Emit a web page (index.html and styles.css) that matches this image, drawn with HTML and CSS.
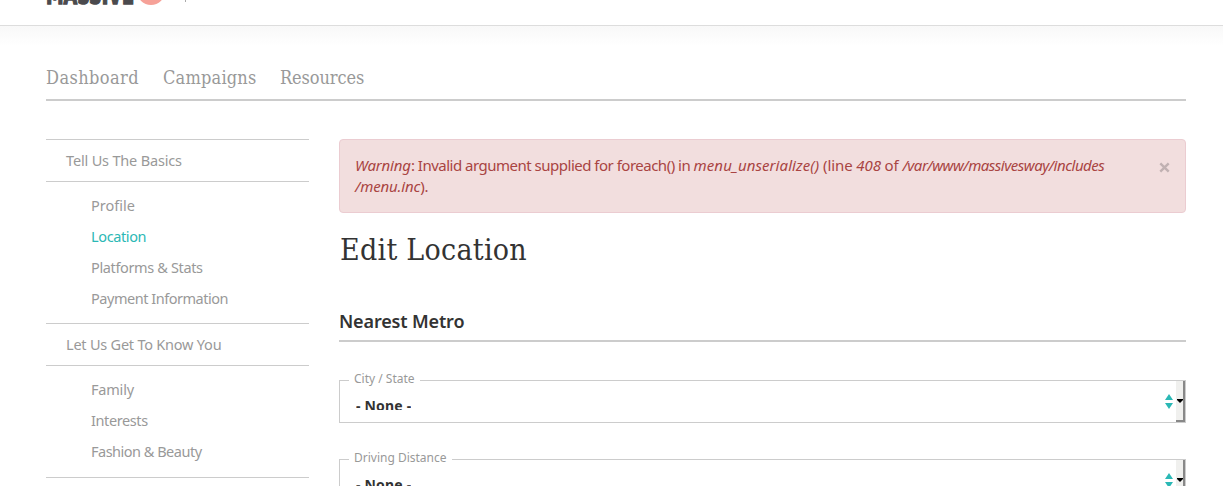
FILE: index.html
```html
<!DOCTYPE html>
<html lang="en">
<head>
<meta charset="utf-8">
<title>Edit Location</title>
<link rel="stylesheet" href="styles.css">
</head>
<body>
<header class="masthead">
  <div class="logo"><span class="logo-word">MASSIVE</span><span class="logo-dot"></span><span class="logo-rule"></span></div>
</header>
<div class="page">
  <nav class="tabs"><a class="t1">Dashboard</a><a class="t2">Campaigns</a><a class="t3">Resources</a></nav>
  <div class="columns">
    <aside class="side">
      <h3 class="group"><span class="g1">Tell Us The Basics</span></h3>
      <ul class="links">
        <li><span class="l1">Profile</span></li>
        <li class="active"><span class="l2">Location</span></li>
        <li><span class="l3">Platforms &amp; Stats</span></li>
        <li><span class="l4">Payment Information</span></li>
      </ul>
      <h3 class="group"><span class="g2">Let Us Get To Know You</span></h3>
      <ul class="links last">
        <li><span class="l5">Family</span></li>
        <li><span class="l6">Interests</span></li>
        <li><span class="l7">Fashion &amp; Beauty</span></li>
      </ul>
      <h3 class="group"></h3>
    </aside>
    <main class="main">
      <div class="alert">
        <p class="message"><span class="m1"><em class="warn">Warning</em>: Invalid argument supplied for foreach() in <em class="call">menu_unserialize()</em><span class="line"> (line <em>408</em> of </span><em class="path">/var/www/massivesway/includes</em></span><br><span class="m2"><em>/menu.inc</em>).</span></p>
        <svg class="close" width="11" height="11" viewBox="0 0 11 11"><path d="M1.3 1.3L9.7 9.7M9.7 1.3L1.3 9.7" stroke="#c1b1b2" stroke-width="2.4"/></svg>
      </div>
      <h1 class="title">Edit Location</h1>
      <h2 class="section">Nearest Metro</h2>
      <div class="field">
        <label class="label f1">City / State</label>
        <span class="value">- None -</span>
        <svg class="arrows" width="8" height="15" viewBox="0 0 8 15"><path d="M4 0L8 6H0zM0 9H8L4 15z" fill="#2bb8b5"/></svg>
        <span class="button"><svg width="6" height="4" viewBox="0 0 6 4"><path d="M0 0H6V1L3 4L0 1z"/></svg></span>
      </div>
      <div class="field">
        <label class="label f2">Driving Distance</label>
        <span class="value">- None -</span>
        <svg class="arrows" width="8" height="15" viewBox="0 0 8 15"><path d="M4 0L8 6H0zM0 9H8L4 15z" fill="#2bb8b5"/></svg>
        <span class="button"><svg width="6" height="4" viewBox="0 0 6 4"><path d="M0 0H6V1L3 4L0 1z"/></svg></span>
      </div>
    </main>
  </div>
</div>
</body>
</html>
```

FILE: styles.css
```css
* { box-sizing: border-box; }
html, body { height: 486px; overflow: hidden; }
body { margin: 0; background: #fff; color: #999; font: 15px/21px "Noto Sans", sans-serif; }
h1, h2, h3, ul, p { margin: 0; padding: 0; font-weight: normal; }
ul { list-style: none; }
.masthead { height: 26px; border-bottom: 1px solid #ddd; overflow: hidden; padding-left: 46px; }
.logo { display: flex; align-items: flex-start; }
.logo-word { font: bold 28px/28px "DejaVu Sans Condensed", "DejaVu Sans", sans-serif; color: #4b4a4d; -webkit-text-stroke: 1.5px #4b4a4d; margin-top: -19px; width: 88px; white-space: nowrap; transform: scaleX(.7); transform-origin: 0 0; }
.logo-dot { width: 28px; height: 28px; border-radius: 50%; background: #f6a198; margin: -23px 0 0 3px; }
.logo-rule { width: 1px; height: 2px; background: #aaa; margin-left: 20px; }
.page { height: 460px; overflow: hidden; padding: 39px 37px 0 46px; background: linear-gradient(#f8f8f8, #fff 20px); }
.tabs { display: flex; height: 36px; border-bottom: 2px solid #ccc; gap: 24px; font: 18px/25px "DejaVu Serif Condensed", "DejaVu Serif", serif; white-space: nowrap; }
.t1 { width: 93px; letter-spacing: .42px; }
.t2 { width: 93px; letter-spacing: .2px; }
.t3 { letter-spacing: -.08px; }
.columns { display: flex; gap: 30px; padding-top: 38px; }
.side { width: 263px; flex: none; white-space: nowrap; }
.group { height: 43px; border: solid #ccc; border-width: 1px 0; padding: 10px 0 0 20px; font-size: 14.5px; line-height: 21px; }
.links { padding: 8px 0 9px 45px; }
.links.last { padding-bottom: 10px; }
.links li { height: 31px; line-height: 31px; font-size: 14.5px; }
.active { color: #2bb8b5; }
.g1 { letter-spacing: -.17px; }
.g2 { letter-spacing: -.22px; }
.l2 { letter-spacing: -.37px; }
.l3 { letter-spacing: -.36px; }
.l4 { letter-spacing: -.47px; }
.l5 { letter-spacing: -.2px; }
.l6 { letter-spacing: -.4px; }
.l7 { letter-spacing: -.5px; }
.main { flex: 1; }
.alert { height: 74px; border: 1px solid #ebccd1; border-radius: 4px; background: #f2dede; color: #a94442; padding: 15px 15px 0; display: flex; justify-content: space-between; white-space: nowrap; }
.m1 { letter-spacing: -.5px; }
.m1 .warn { letter-spacing: -.15px; }
.m1 .call { letter-spacing: .08px; }
.m1 .line { letter-spacing: -.1px; }
.m1 .path { letter-spacing: -.48px; }
.m2 { letter-spacing: -.15px; }
.close { margin-top: 7px; }
.title { margin-top: 17px; height: 40px; padding-left: 1px; color: #333; font: 30px/40px "DejaVu Serif Condensed", "DejaVu Serif", serif; letter-spacing: .27px; }
.section { margin-top: 38px; height: 34px; border-bottom: 2px solid #ccc; color: #333; font-size: 18px; line-height: 26px; font-weight: 600; letter-spacing: -.15px; }
.field { display: flex; position: relative; height: 43px; border: 1px solid #ccc; margin-top: 36px; }
.section + .field { margin-top: 38px; }
.label { position: absolute; left: 9px; top: -11px; padding: 0 5px; background: #fff; font-size: 12px; line-height: 18px; white-space: nowrap; }
.value { margin: 14px auto 0 16px; height: 15px; overflow: hidden; color: #333; font-size: 14px; line-height: 21px; font-weight: bold; letter-spacing: .2px; }
.arrows { margin: 13px 3px 0 0; }
.button { width: 9px; height: 41px; background: #f0f0ee; border: solid #888; border-width: 0 2px 2px 0; padding: 18px 0 0 1px; display: flex; align-items: flex-start; }
.button svg { flex: none; }
```
